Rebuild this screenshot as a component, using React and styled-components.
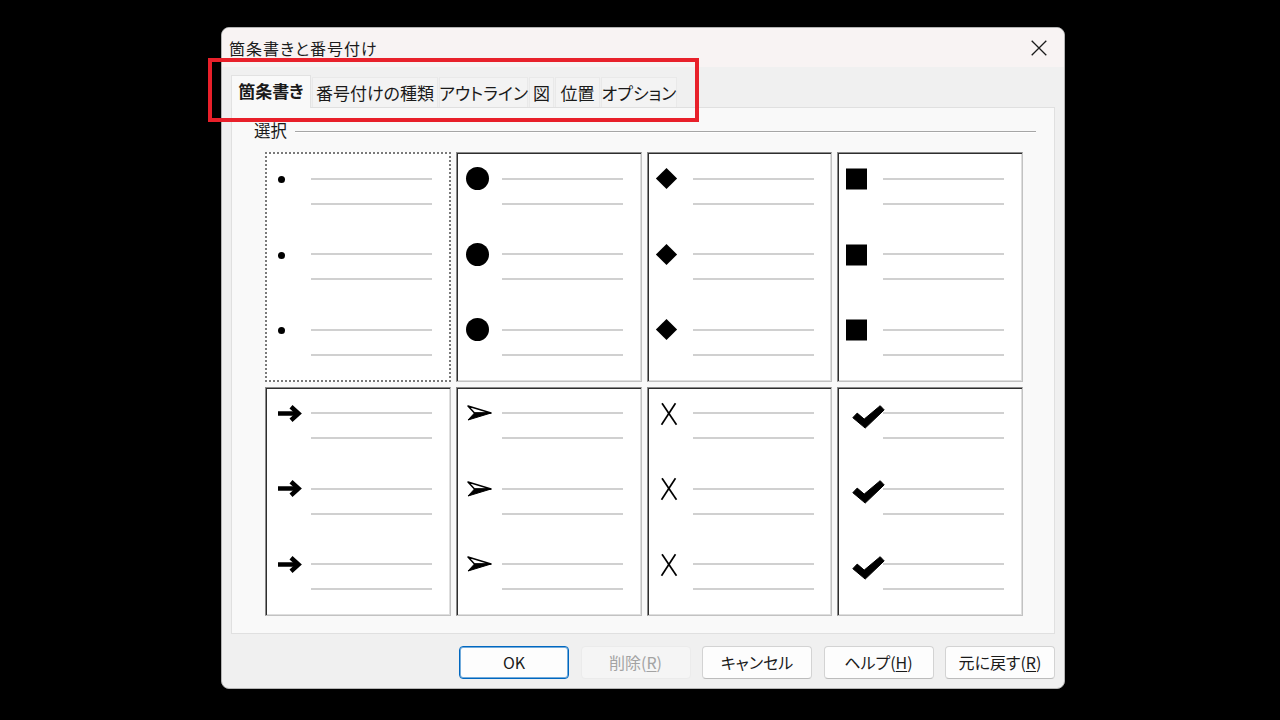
import React from 'react';
import styled, { createGlobalStyle } from 'styled-components';

const GlobalStyle = createGlobalStyle`
  html, body { margin: 0; padding: 0; background: #000; }
  body {
    font-family: "Noto Sans CJK JP", "Noto Sans", sans-serif;
    font-feature-settings: "palt";
    -webkit-font-smoothing: antialiased;
  }
  * { box-sizing: border-box; }
`;

const Screen = styled.div`
  position: relative;
  width: 1280px;
  height: 720px;
  background: #000;
  padding: 27px 0 0 221px;
  overflow: hidden;
`;

const Dialog = styled.div`
  width: 844px;
  height: 662px;
  border: 1px solid #b4b4b4;
  border-radius: 8px;
  background: #f0f0f0;
  overflow: hidden;
  display: flex;
  flex-direction: column;
`;

const TitleBar = styled.div`
  height: 39px;
  flex: none;
  display: flex;
  align-items: center;
  justify-content: space-between;
  padding: 0 17px 0 7px;
  background: #f8f3f3;
  color: #1b1b1b;
  font-size: 16px;
  letter-spacing: 1px;
`;

const Title = styled.span`
  line-height: 1;
  margin-top: 0px;
`;

const CloseIcon = styled.svg`
  display: block;
`;

const Body = styled.div`
  flex: 1;
  display: flex;
  flex-direction: column;
  padding: 8px 9px 0 9px;
`;

const TabRow = styled.div`
  height: 32px;
  display: flex;
  align-items: flex-end;
  gap: 1px;
  position: relative;
  z-index: 1;
`;

const Tab = styled.div`
  width: ${p => p.$w}px;
  height: ${p => (p.$active ? 33 : 30)}px;
  margin-bottom: ${p => (p.$active ? -1 : 0)}px;
  display: flex;
  align-items: center;
  justify-content: center;
  padding-bottom: ${p => (p.$active ? 3 : 1)}px;
  background: ${p => (p.$active ? '#f9f9f9' : '#f3f3f3')};
  border: 1px solid ${p => (p.$active ? '#e2e2e2' : '#e9e9e9')};
  border-bottom: none;
  color: #1a1a1a;
  font-size: 17px;
  font-weight: ${p => (p.$active ? 700 : 400)};
  white-space: nowrap;
`;

const Panel = styled.div`
  width: 824px;
  height: 527px;
  border: 1px solid #e0e0e0;
  background: #f9f9f9;
  padding-top: 11px;
  display: flex;
  flex-direction: column;
`;

const GroupHeader = styled.div`
  height: 24px;
  display: flex;
  align-items: center;
  gap: 8px;
  margin: 0 18px 0 22px;
`;

const GroupLabel = styled.span`
  font-size: 16.5px;
  color: #1a1a1a;
  line-height: 1;
  margin-top: -1px;
`;

const GroupLine = styled.div`
  flex: 1;
  height: 1px;
  background: #a6a6a6;
  box-shadow: 0 1px 0 #ffffff;
`;

const Grid = styled.div`
  margin: 9px 0 0 33px;
  width: 758px;
  display: grid;
  grid-template-columns: repeat(4, 1fr);
  grid-template-rows: repeat(2, 229.5px);
  gap: 5px;
`;

const Cell = styled.div`
  background: #fff;
  display: flex;
  flex-direction: column;
  gap: 48.5px;
  padding-top: ${p => (p.$selected ? 23.5 : 24.5)}px;
  padding-left: ${p => (p.$selected ? 0 : 1)}px;
  ${p =>
    p.$selected
      ? `border: 2px dotted #7a7a7a;`
      : `border: 1px solid;
         border-color: #8a8a8a #c2c2c2 #c2c2c2 #8a8a8a;
         box-shadow: inset 1px 1px 0 #2e2e2e, inset -1px -1px 0 #dedede;`}
`;

const Item = styled.div`
  display: flex;
  align-items: flex-start;
`;

const BulletSlot = styled.div`
  width: 44px;
  height: 2px;
  flex: none;
  display: flex;
  align-items: center;
`;

const Bullet = styled.div`
  flex: none;
  margin-left: ${p => p.$x}px;
  transform: translateY(${p => p.$dy || 0}px);
  display: flex;
`;

const Lines = styled.div`
  width: 121px;
  display: flex;
  flex-direction: column;
  gap: 23px;
`;

const TextLine = styled.div`
  height: 2px;
  background: #d0d0d0;
`;

const Dot = styled.div`
  width: ${p => p.$size}px;
  height: ${p => p.$size}px;
  border-radius: 50%;
  background: #000;
`;

const Square = styled.div`
  width: ${p => p.$size}px;
  height: ${p => p.$size}px;
  background: #000;
  transform: ${p => (p.$rotate ? 'rotate(45deg)' : 'none')};
`;

const Footer = styled.div`
  display: flex;
  justify-content: flex-end;
  gap: 11.5px;
  margin-top: 12px;
`;

const Button = styled.button`
  width: 110px;
  height: 33px;
  border-radius: 4px;
  font-family: inherit;
  font-feature-settings: "palt";
  font-size: 16px;
  color: ${p => (p.disabled ? '#a3a3a3' : '#1a1a1a')};
  background: ${p => (p.disabled ? '#f5f5f5' : '#fdfdfd')};
  border: 1px solid ${p => (p.$primary ? '#0067c0' : p.disabled ? '#ebebeb' : '#d3d3d3')};
  border-bottom-color: ${p => (p.$primary ? '#0067c0' : p.disabled ? '#ebebeb' : '#bcbcbc')};
  box-shadow: ${p => (p.$primary ? 'inset 0 0 0 1px rgba(0,103,192,0.55)' : 'none')};
  padding: 0 0 2px 0;
  display: flex;
  align-items: center;
  justify-content: center;
`;

const Mnemonic = styled.span`
  text-decoration: underline;
  text-underline-offset: 2px;
`;

const Annotation = styled.div`
  position: absolute;
  left: 208px;
  top: 58px;
  width: 491px;
  height: 64px;
  border: 4px solid #e8202a;
  pointer-events: none;
`;

const ArrowIcon = () => (
  <svg width="26" height="17" viewBox="0 0 26 17">
    <path d="M1 8.5 H21" stroke="#000" strokeWidth="4.5" />
    <path d="M14 1.8 L21.5 8.5 L14 15.2" stroke="#000" strokeWidth="4.5" fill="none" strokeLinejoin="miter" strokeMiterlimit="4" />
  </svg>
);

const ArrowheadIcon = () => (
  <svg width="25" height="16" viewBox="0 0 25 16">
    <path d="M1 1 L24 8 L7.5 8 Z" fill="#fff" stroke="#000" strokeWidth="1.5" strokeLinejoin="round" />
    <path d="M7.5 8 L24 8 L1 15 Z" fill="#000" stroke="#000" strokeWidth="1" strokeLinejoin="round" />
  </svg>
);

const XIcon = () => (
  <svg width="18" height="23" viewBox="0 0 18 23">
    <path d="M2 0.8 L16.5 22.2" stroke="#000" strokeWidth="1.7" />
    <path d="M15.5 0.8 L1.5 22.2" stroke="#000" strokeWidth="1.7" />
  </svg>
);

const CheckIcon = () => (
  <svg width="33" height="25" viewBox="0 0 33 25">
    <path
      d="M0.8 13.2 L5.2 8.6 L12.2 14.6 L28.2 1.2 L32.2 5.4 L13.2 23.6 Z"
      fill="#000"
      stroke="#000"
      strokeWidth="1"
      strokeLinejoin="round"
    />
  </svg>
);

const bulletKinds = [
  { key: 'dot', x: 10, dy: 1, node: <Dot $size={7} /> },
  { key: 'circle', x: 8.5, dy: 0, node: <Dot $size={23} /> },
  { key: 'diamond', x: 10.5, dy: 0, node: <Square $size={15} $rotate /> },
  { key: 'square', x: 7, dy: 0.5, node: <Square $size={21} /> },
  { key: 'arrow', x: 10, dy: 0, node: <ArrowIcon /> },
  { key: 'arrowhead', x: 9, dy: 0, node: <ArrowheadIcon /> },
  { key: 'x', x: 11, dy: 0.5, node: <XIcon /> },
  { key: 'check', x: 13, dy: 3.5, node: <CheckIcon /> },
];

const tabs = [
  { label: '箇条書き', w: 80, active: true },
  { label: '番号付けの種類', w: 126 },
  { label: 'アウトライン', w: 89 },
  { label: '図', w: 25 },
  { label: '位置', w: 45 },
  { label: 'オプション', w: 76 },
];

const BulletCell = ({ kind, selected }) => (
  <Cell $selected={selected}>
    {[0, 1, 2].map(i => (
      <Item key={i}>
        <BulletSlot>
          <Bullet $x={selected ? kind.x + 1 : kind.x} $dy={kind.dy}>
            {kind.node}
          </Bullet>
        </BulletSlot>
        <Lines>
          <TextLine />
          <TextLine />
        </Lines>
      </Item>
    ))}
  </Cell>
);

export default function App() {
  return (
    <>
      <GlobalStyle />
      <Screen>
        <Dialog>
          <TitleBar>
            <Title>箇条書きと番号付け</Title>
            <CloseIcon width="16" height="16" viewBox="0 0 16 16">
              <path d="M0.7 0.7 L15.3 15.3 M15.3 0.7 L0.7 15.3" stroke="#1b1b1b" strokeWidth="1.3" fill="none" />
            </CloseIcon>
          </TitleBar>
          <Body>
            <TabRow>
              {tabs.map(t => (
                <Tab key={t.label} $w={t.w} $active={t.active}>
                  {t.label}
                </Tab>
              ))}
            </TabRow>
            <Panel>
              <GroupHeader>
                <GroupLabel>選択</GroupLabel>
                <GroupLine />
              </GroupHeader>
              <Grid>
                {bulletKinds.map((k, i) => (
                  <BulletCell key={k.key} kind={k} selected={i === 0} />
                ))}
              </Grid>
            </Panel>
            <Footer>
              <Button $primary>OK</Button>
              <Button disabled>
                削除(<Mnemonic>R</Mnemonic>)
              </Button>
              <Button>キャンセル</Button>
              <Button>
                ヘルプ(<Mnemonic>H</Mnemonic>)
              </Button>
              <Button>
                元に戻す(<Mnemonic>R</Mnemonic>)
              </Button>
            </Footer>
          </Body>
        </Dialog>
        <Annotation />
      </Screen>
    </>
  );
}
